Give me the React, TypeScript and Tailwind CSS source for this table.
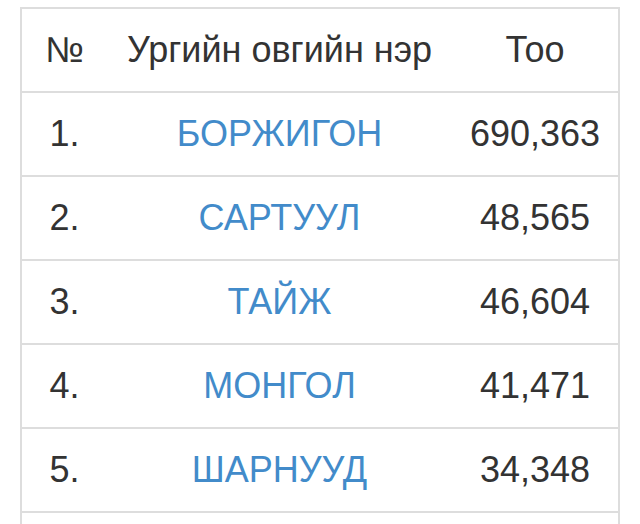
const ROWS = [
  { n: "1.", name: "БОРЖИГОН", count: "690,363" },
  { n: "2.", name: "САРТУУЛ", count: "48,565" },
  { n: "3.", name: "ТАЙЖ", count: "46,604" },
  { n: "4.", name: "МОНГОЛ", count: "41,471" },
  { n: "5.", name: "ШАРНУУД", count: "34,348" },
];

export default function App() {
  return (
    <div className="h-[524px] overflow-hidden bg-white pl-[20px] pt-[7px] font-['Liberation_Sans',Arial,sans-serif] text-[36px] text-[#333]">
      <div className="w-[600px] border-x-2 border-[#ddd]">
        {/* header */}
        <div className="flex h-[84px] items-center border-t-2 border-[#ddd]">
          <div className="w-[85px] text-center">№</div>
          <div className="w-[345px] text-center">Ургийн овгийн нэр</div>
          <div className="flex-1 text-center">Тоо</div>
        </div>
        {ROWS.map((r) => (
          <div key={r.n} className="flex h-[84px] items-center border-t-2 border-[#ddd]">
            <div className="w-[85px] text-center">{r.n}</div>
            <div className="w-[345px] text-center">
              <a href="#" className="text-[#428bca]">
                {r.name}
              </a>
            </div>
            <div className="flex-1 text-center">{r.count}</div>
          </div>
        ))}
        <div className="h-[84px] border-t-2 border-[#ddd]" />
      </div>
    </div>
  );
}
